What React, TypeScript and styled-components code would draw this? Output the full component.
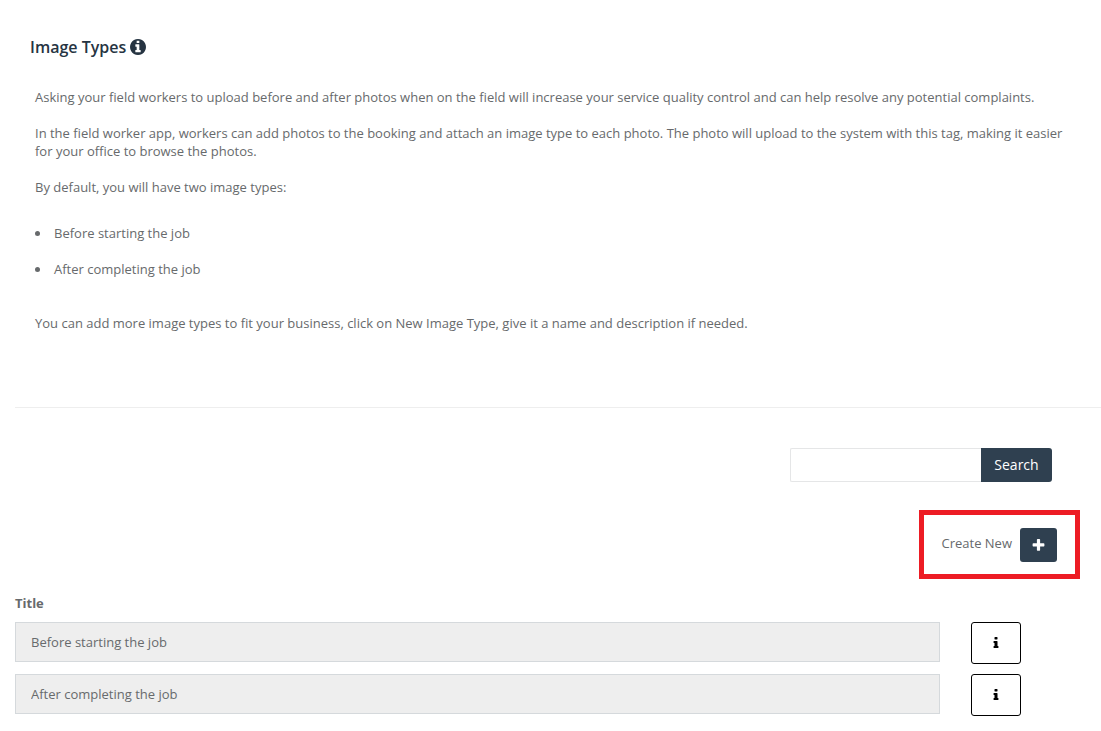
import React from "react";
import styled, { createGlobalStyle } from "styled-components";

const GlobalStyle = createGlobalStyle`
  *, *::before, *::after { box-sizing: border-box; }
  body {
    margin: 0;
    background: #fff;
    color: #676a6c;
    font-family: "Open Sans", "Helvetica Neue", Arial, sans-serif;
    font-size: 13px;
    line-height: 18px;
  }
  button, input { font-family: inherit; }
`;

const Page = styled.main`
  padding: 35px 0 0 15px;
`;

const Intro = styled.section`
  padding: 0 15px;
`;

const Heading = styled.h1`
  display: flex;
  align-items: center;
  gap: 4px;
  margin: 0;
  color: #263442;
  font-size: 16px;
  font-weight: 600;
  line-height: 24px;
`;

const Description = styled.div`
  padding: 29px 5px 57px;
`;

const Paragraph = styled.p`
  margin: 0 0 18px;
`;

const TypeList = styled.ul`
  display: grid;
  gap: 18px;
  margin: 28px 0 36px;
  padding: 0;
  list-style: none;
`;

const TypeItem = styled.li`
  display: flex;
  align-items: center;
  gap: 14px;

  &::before {
    content: "";
    width: 5px;
    height: 5px;
    border-radius: 50%;
    background: currentColor;
  }
`;

const Divider = styled.hr`
  height: 1px;
  margin: 0;
  border: 0;
  background: #eee;
`;

const SearchForm = styled.form`
  display: flex;
  justify-content: flex-end;
  margin: 40px 49px 0 0;
`;

const SearchInput = styled.input`
  width: 191px;
  height: 34px;
  padding: 6px 12px;
  border: 1px solid #e5e6e7;
  border-right: 0;
  border-radius: 2px 0 0 2px;
  background: #fff;
  color: inherit;
  font-size: 14px;
`;

const PrimaryButton = styled.button<{ $attached?: boolean }>`
  display: flex;
  align-items: center;
  justify-content: center;
  width: ${(p) => (p.$attached ? 71 : 37)}px;
  height: 34px;
  padding: 0;
  border: 0;
  border-radius: ${(p) => (p.$attached ? "0 3px 3px 0" : "3px")};
  background: #2f4050;
  color: #fff;
  font-size: 14px;
  line-height: 20px;
  cursor: pointer;
`;

const CreateBox = styled.div`
  display: flex;
  align-items: center;
  gap: 8px;
  width: fit-content;
  margin: 28px 21px 0 auto;
  padding: 13px 18px 12px;
  border: 5px solid #ed1c24;
`;

const CreateLabel = styled.label`
  padding-bottom: 4px;
`;

const TypeTable = styled.table`
  width: 100%;
  margin-top: 15px;
  border-collapse: collapse;
`;

const TitleHeader = styled.th`
  height: 28px;
  padding: 0 0 10px;
  text-align: left;
  font-weight: 700;
`;

const FieldCell = styled.td`
  padding: 0 0 10px;
  vertical-align: top;
`;

const ActionCell = styled.td`
  width: 161px;
  padding: 0 0 10px 31px;
  vertical-align: top;
`;

const TypeField = styled.input`
  display: block;
  width: 100%;
  height: 40px;
  padding: 0 15px;
  border: 1px solid #d5d9dc;
  border-radius: 0;
  background: #eee;
  color: inherit;
  font-size: 13px;
`;

const InfoButton = styled.button`
  display: flex;
  align-items: center;
  justify-content: center;
  width: 50px;
  height: 42px;
  padding: 0;
  border: 1px solid #000;
  border-radius: 3px;
  background: #fff;
  color: #000;
  cursor: pointer;
`;

const Glyph = styled.svg`
  display: block;
  flex: none;
  fill: currentColor;
`;

const InfoCircleIcon = () => (
  <Glyph width="16" height="16" viewBox="128 128 1536 1536" aria-hidden="true">
    <path d="M1152 1376v-160q0-14-9-23t-23-9h-96v-512q0-14-9-23t-23-9h-320q-14 0-23 9t-9 23v160q0 14 9 23t23 9h96v320h-96q-14 0-23 9t-9 23v160q0 14 9 23t23 9h448q14 0 23-9t9-23zm-128-896v-160q0-14-9-23t-23-9h-192q-14 0-23 9t-9 23v160q0 14 9 23t23 9h192q14 0 23-9t9-23zm640 416q0 209-103 385.5t-279.5 279.5-385.5 103-385.5-103-279.5-279.5-103-385.5 103-385.5 279.5-279.5 385.5-103 385.5 103 279.5 279.5 103 385.5z" />
  </Glyph>
);

const PlusIcon = () => (
  <Glyph width="15" height="15" viewBox="0 0 1792 1792" aria-hidden="true">
    <path d="M1600 736v192q0 40-28 68t-68 28h-416v416q0 40-28 68t-68 28h-192q-40 0-68-28t-28-68v-416h-416q-40 0-68-28t-28-68v-192q0-40 28-68t68-28h416v-416q0-40 28-68t68-28h192q40 0 68 28t28 68v416h416q40 0 68 28t28 68z" />
  </Glyph>
);

const InfoIcon = () => (
  <Glyph width="14" height="14" viewBox="0 0 1792 1792" aria-hidden="true">
    <path d="M1216 1344v128q0 26-19 45t-45 19h-512q-26 0-45-19t-19-45v-128q0-26 19-45t45-19h64v-384h-64q-26 0-45-19t-19-45v-128q0-26 19-45t45-19h384q26 0 45 19t19 45v576h64q26 0 45 19t19 45zm-128-1152v192q0 26-19 45t-45 19h-256q-26 0-45-19t-19-45v-192q0-26 19-45t45-19h256q26 0 45 19t19 45z" />
  </Glyph>
);

const imageTypes = ["Before starting the job", "After completing the job"];

export default function App() {
  return (
    <>
      <GlobalStyle />
      <Page>
        <Intro>
          <Heading>
            Image Types <InfoCircleIcon />
          </Heading>
          <Description>
            <Paragraph>
              Asking your field workers to upload before and after photos when on the field will
              increase your service quality control and can help resolve any potential complaints.
            </Paragraph>
            <Paragraph>
              In the field worker app, workers can add photos to the booking and attach an image
              type to each photo. The photo will upload to the system with this tag, making it
              easier for your office to browse the photos.
            </Paragraph>
            <Paragraph>By default, you will have two image types:</Paragraph>
            <TypeList>
              {imageTypes.map((name) => (
                <TypeItem key={name}>{name}</TypeItem>
              ))}
            </TypeList>
            <Paragraph>
              You can add more image types to fit your business, click on New Image Type, give it a
              name and description if needed.
            </Paragraph>
          </Description>
        </Intro>
        <Divider />
        <SearchForm role="search" onSubmit={(e) => e.preventDefault()}>
          <SearchInput type="text" aria-label="Search image types" />
          <PrimaryButton type="submit" $attached>
            Search
          </PrimaryButton>
        </SearchForm>
        <CreateBox>
          <CreateLabel htmlFor="create-type">Create New</CreateLabel>
          <PrimaryButton type="button" id="create-type">
            <PlusIcon />
          </PrimaryButton>
        </CreateBox>
        <TypeTable>
          <thead>
            <tr>
              <TitleHeader scope="col" colSpan={2}>
                Title
              </TitleHeader>
            </tr>
          </thead>
          <tbody>
            {imageTypes.map((name) => (
              <tr key={name}>
                <FieldCell>
                  <TypeField type="text" readOnly value={name} aria-label="Title" />
                </FieldCell>
                <ActionCell>
                  <InfoButton type="button" aria-label={`Details of ${name}`}>
                    <InfoIcon />
                  </InfoButton>
                </ActionCell>
              </tr>
            ))}
          </tbody>
        </TypeTable>
      </Page>
    </>
  );
}
